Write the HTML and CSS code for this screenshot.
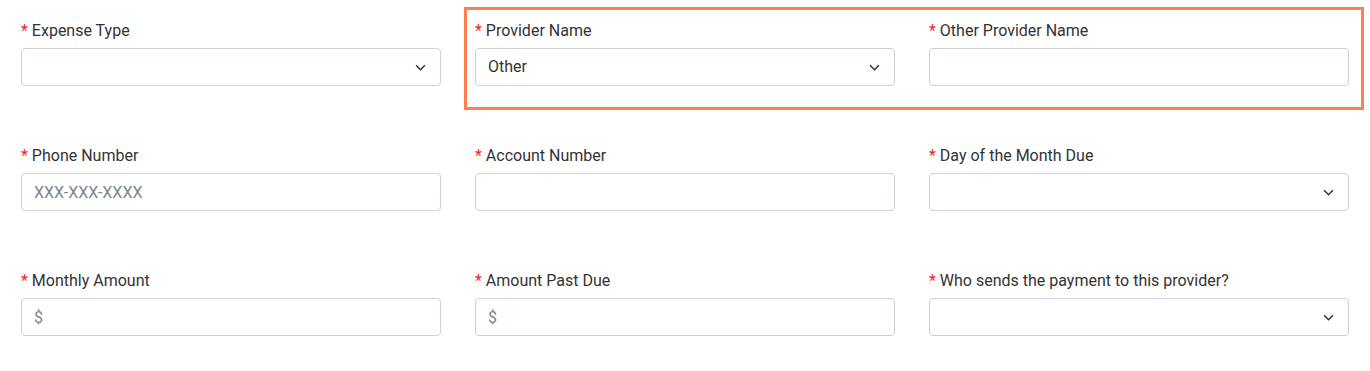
FILE: index.html
```html
<!DOCTYPE html>
<html lang="en">
<head>
    <meta charset="UTF-8">
    <meta name="viewport" content="width=device-width, initial-scale=1.0">
    <title>Expense</title>
    <link rel="stylesheet" href="styles.css">
</head>
<body>
    <form class="expense-form">
        <div class="field">
            <label><span class="req">*</span> Expense Type</label>
            <div class="select-wrap">
                <select>
                    <option></option>
                </select>
                <svg class="chevron" viewBox="0 0 10 6"><polyline points="1,1 5,5 9,1"/></svg>
            </div>
        </div>
        <div class="field provider">
            <label><span class="req">*</span> Provider Name</label>
            <div class="select-wrap">
                <select>
                    <option>Other</option>
                </select>
                <svg class="chevron" viewBox="0 0 10 6"><polyline points="1,1 5,5 9,1"/></svg>
            </div>
        </div>
        <div class="field other-provider">
            <label><span class="req">*</span> Other Provider Name</label>
            <input type="text">
        </div>
        <!-- highlight around the provider fields -->
        <div class="highlight"></div>

        <div class="field">
            <label><span class="req">*</span> Phone Number</label>
            <input type="text" placeholder="XXX-XXX-XXXX">
        </div>
        <div class="field">
            <label><span class="req">*</span> Account Number</label>
            <input type="text">
        </div>
        <div class="field">
            <label><span class="req">*</span> Day of the Month Due</label>
            <div class="select-wrap">
                <select>
                    <option></option>
                </select>
                <svg class="chevron" viewBox="0 0 10 6"><polyline points="1,1 5,5 9,1"/></svg>
            </div>
        </div>

        <div class="field">
            <label><span class="req">*</span> Monthly Amount</label>
            <input type="text" placeholder="$">
        </div>
        <div class="field">
            <label><span class="req">*</span> Amount Past Due</label>
            <input type="text" placeholder="$">
        </div>
        <div class="field">
            <label><span class="req">*</span> Who sends the payment to this provider?</label>
            <div class="select-wrap">
                <select>
                    <option></option>
                </select>
                <svg class="chevron" viewBox="0 0 10 6"><polyline points="1,1 5,5 9,1"/></svg>
            </div>
        </div>
    </form>
</body>
</html>
```

FILE: styles.css
```css
body {
    font-family: Roboto, Arial, sans-serif;
    background-color: #fff;
    color: #333;
    margin: 0;
    padding: 20px 21px 0;
}
.expense-form {
    display: grid;
    grid-template-columns: repeat(3, 420px);
    column-gap: 34px;
    row-gap: 59px;
}
.field {
    display: flex;
    flex-direction: column;
    gap: 6px;
}
.field.provider {
    grid-row: 1;
    grid-column: 2;
}
.field.other-provider {
    grid-row: 1;
    grid-column: 3;
}
.field label {
    font-size: 16px;
    line-height: 22px;
    color: #333;
}
.req {
    color: #f5222d;
}
.field input,
.field select {
    box-sizing: border-box;
    width: 100%;
    height: 38px;
    padding: 0 12px;
    border: 1px solid #ccd0d8;
    border-radius: 4px;
    background: #fff;
    font-family: Roboto, Arial, sans-serif;
    font-size: 16px;
    color: #333;
    outline: none;
}
.field input::placeholder {
    color: #7d8591;
}
.field select {
    appearance: none;
    -webkit-appearance: none;
    padding-bottom: 1px;
}
.select-wrap {
    position: relative;
}
.chevron {
    position: absolute;
    right: 15px;
    top: 16px;
    width: 11px;
    height: 7px;
    fill: none;
    stroke: #333;
    stroke-width: 1.4;
    pointer-events: none;
}
.highlight {
    grid-column: 2 / 4;
    grid-row: 1;
    margin: -13px -15px -24px -11px;
    border: 3px solid #ff7f50;
    pointer-events: none;
}
```
